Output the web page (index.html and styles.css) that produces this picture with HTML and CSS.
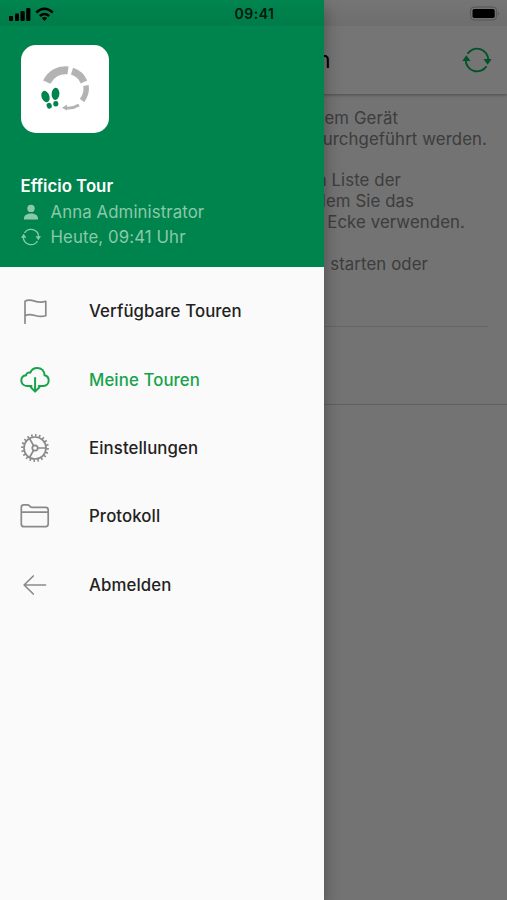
FILE: index.html
```html
<!DOCTYPE html>
<html lang="de">

<head>
    <meta charset="UTF-8">
    <meta name="viewport" content="width=device-width, initial-scale=1.0">
    <title>Efficio Tour</title>
    <link rel="stylesheet" href="styles.css">
</head>

<body>
    <div class="screen">
        <!-- Page behind the drawer -->
        <main class="page">
            <header class="page-header">
                <h1>n</h1>
                <svg class="sync" viewBox="0 0 30 28">
                    <path d="M5.500 7.800A11.300 11.300 0 0 1 26.300 14M24.500 20.200A11.300 11.300 0 0 1 3.700 14" fill="none" stroke="currentColor" stroke-width="1.9"/>
                    <path d="M21.500 13h8.200l-4.100 5.800zM.3 15h8.200L4.400 9.200z" fill="currentColor"/>
                </svg>
            </header>
            <section class="intro">
                <p class="end-gerat">dem Gerät</p>
                <p class="end-werden">durchgeführt werden.</p>
                <p class="end-liste gap">n Liste der</p>
                <p class="end-das">dem Sie das</p>
                <p class="end-verwenden">Ecke verwenden.</p>
                <p class="end-oder gap">starten oder</p>
            </section>
            <div class="row"></div>
        </main>
        <div class="scrim"></div>

        <!-- Drawer -->
        <aside class="drawer">
            <div class="drawer-header">
                <div class="logo">
                    <svg viewBox="0 0 88 88">
                        <g fill="none" stroke="#b3b3b3">
                            <path d="M25.800 37.200A20 20 0 0 1 47 25.400" stroke-width="8"/>
                            <path d="M51 26.200A19.500 19.500 0 0 1 63 37" stroke-width="7"/>
                            <path d="M65 40.500A20 20 0 0 1 61 55.500" stroke-width="5.500"/>
                            <path d="M58 60A21 21 0 0 1 44 62.800" stroke-width="2.800"/>
                        </g>
                        <path d="M41 62.700l5-3.200v6z" fill="#b3b3b3"/>
                        <g fill="#00844d">
                            <ellipse cx="24.500" cy="51.500" rx="3.900" ry="5.900" transform="rotate(-20 24.500 51.500)"/>
                            <rect x="25.700" y="57.800" width="5" height="5.800" rx="2.300" transform="rotate(-20 28.200 60.700)"/>
                            <ellipse cx="34.500" cy="48.900" rx="3.900" ry="6.100" transform="rotate(3 34.500 48.900)"/>
                            <rect x="32.300" y="55.900" width="5" height="5.600" rx="2.300"/>
                        </g>
                    </svg>
                </div>
                <h2>Efficio Tour</h2>
                <div class="info">
                    <svg viewBox="0 0 20 20">
                        <circle cx="10" cy="6.400" r="3.700" fill="currentColor"/>
                        <path d="M3 17.500v-1.200c0-3.100 3.600-4.700 7-4.700s7 1.600 7 4.700v1.200z" fill="currentColor"/>
                    </svg>
                    <span>Anna Administrator</span>
                </div>
                <div class="info">
                    <svg viewBox="0 0 20 20">
                        <path d="M3.500 6A7.700 7.700 0 0 1 17.700 10M16.500 14A7.700 7.700 0 0 1 2.300 10" fill="none" stroke="currentColor" stroke-width="1.300"/>
                        <path d="M14.600 9.300h5.400l-2.700 3.900zM0 10.700h5.400L2.700 6.800z" fill="currentColor"/>
                    </svg>
                    <span>Heute, 09:41 Uhr</span>
                </div>
            </div>
            <nav class="menu">
                <a class="item">
                    <svg viewBox="0 0 30 30">
                        <path d="M5 27.200V5.200c3-1.800 6-1.300 9.600-.1 4 1.300 7 1.400 11.200.3v14.300c-3.400 1.200-6.800 1-10.800-.2-4-1.100-7-1.200-10 .1"/>
                    </svg>
                    <span>Verfügbare Touren</span>
                </a>
                <a class="item active">
                    <svg viewBox="0 0 30 30">
                        <path d="M11.500 20.900H6.800C3.600 20.900 1.300 18.600 1.300 15.600c0-2.900 2-5 4.800-5.300.2-2 1.900-3.200 4.200-2.600C11.500 4.600 14 2.900 17.200 2.900c4.300 0 7.200 3.100 7.300 7.400 2.600.6 4.200 2.500 4.200 5.200 0 3.100-2.200 5.400-5.300 5.400h-4.600"/>
                        <path d="M15.100 13v13M10.800 22.300l4.300 4.300 4.300-4.300"/>
                    </svg>
                    <span>Meine Touren</span>
                </a>
                <a class="item">
                    <svg viewBox="0 0 30 30">
                        <circle cx="15" cy="15" r="11"/>
                        <circle class="teeth" cx="15" cy="15" r="12.700" pathLength="80"/>
                        <circle cx="15" cy="15" r="2.700"/>
                        <path d="M17.700 15H26M13.600 12.700L9.500 5.500M13.600 17.300L9.500 24.500"/>
                    </svg>
                    <span>Einstellungen</span>
                </a>
                <a class="item">
                    <svg viewBox="0 0 30 30">
                        <path d="M1.300 10.200V6.300c0-1.600.8-2.400 2.400-2.400h3.800c2.200 0 2.300 2.500 4.800 2.500h13.400c1.600 0 2.500.9 2.500 2.500v14.200c0 1.700-.9 2.600-2.500 2.600H3.900c-1.700 0-2.600-.9-2.600-2.600zM1.300 11.200h26.900"/>
                    </svg>
                    <span>Protokoll</span>
                </a>
                <a class="item">
                    <svg viewBox="0 0 30 30">
                        <path d="M25.500 15H4.400M13.300 6L4.100 15l9.200 9"/>
                    </svg>
                    <span>Abmelden</span>
                </a>
            </nav>
        </aside>

        <!-- Status bar -->
        <div class="status">
            <svg class="signal" viewBox="0 0 46 16">
                <rect x="0" y="10" width="4" height="5" rx="1"/>
                <rect x="6" y="7.500" width="4" height="7.500" rx="1"/>
                <rect x="11.500" y="5" width="4.200" height="10" rx="1"/>
                <rect x="17.200" y="2" width="4.200" height="13" rx="1"/>
                <g class="waves">
                    <path d="M27.300 6.500Q35.500-.8 43.700 6.500"/>
                    <path d="M30.800 10Q35.500 6 40.200 10"/>
                </g>
                <path d="M32.800 11.900q2.700-2 5.400 0l-2.700 3z"/>
            </svg>
            <time>09:41</time>
            <svg class="battery" viewBox="0 0 30 16">
                <rect class="frame" x=".6" y="1" width="26" height="13" rx="3.500"/>
                <rect x="2.500" y="3" width="22.200" height="9" rx="1.800"/>
                <path class="cap" d="M28 5.500q2 2 0 4z"/>
            </svg>
        </div>
    </div>
</body>

</html>
```
FILE: styles.css
```css
body {
    margin: 0;
    font-family: 'Inter', 'Liberation Sans', sans-serif;
    color: #222;
}

h1,
h2,
p {
    margin: 0;
}

.screen {
    position: relative;
    width: 507px;
    height: 900px;
    overflow: hidden;
}

/* Page behind the drawer */
.page {
    height: 900px;
    background-color: #fafafa;
}

.page-header {
    display: flex;
    align-items: center;
    justify-content: space-between;
    box-sizing: border-box;
    height: 94px;
    padding: 26px 15px 0 317px;
    background-color: #fff;
    box-shadow: 0 1px 3px rgba(0, 0, 0, 0.35);
}

.page-header h1 {
    font-size: 23px;
    font-weight: 400;
    color: #000;
}

.sync {
    width: 30px;
    height: 28px;
    color: #00b355;
}

.intro {
    box-sizing: border-box;
    height: 233px;
    margin-right: 19px;
    padding-top: 14px;
    border-bottom: 1px solid #dcdcdc;
    text-align: right;
    font-size: 16.8px;
    line-height: 20.8px;
    letter-spacing: 0.1px;
    color: #858585;
}

.intro .gap {
    margin-top: 20.8px;
}

.end-gerat {
    padding-right: 90px;
}

.end-werden {
    padding-right: 1px;
}

.end-liste {
    padding-right: 87px;
}

.end-das {
    padding-right: 74px;
}

.end-verwenden {
    padding-right: 23px;
}

.end-oder {
    padding-right: 60px;
}

.row {
    height: 77px;
    border-bottom: 1px solid #d2d2d2;
}

.scrim {
    position: absolute;
    inset: 0;
    background-color: rgba(0, 0, 0, 0.54);
}

/* Drawer */
.drawer {
    position: absolute;
    top: 0;
    left: 0;
    width: 323.5px;
    height: 900px;
    background-color: #fafafa;
    box-shadow: 0 8px 16px rgba(0, 0, 0, 0.35);
}

.drawer-header {
    box-sizing: border-box;
    height: 267px;
    padding: 45px 20.5px 0;
    background-color: #00844d;
}

.logo {
    width: 88px;
    height: 88px;
    border-radius: 15px;
    background-color: #fff;
}

.logo svg {
    display: block;
}

.drawer-header h2 {
    margin-top: 40px;
    font-size: 16.8px;
    line-height: 26px;
    font-weight: 600;
    color: #fff;
}

.info {
    display: flex;
    align-items: center;
    gap: 10px;
    height: 25.5px;
    font-size: 16.8px;
    letter-spacing: 0.1px;
    color: #8bc9aa;
}

.info svg {
    width: 20px;
    height: 20px;
}

.menu {
    padding-top: 10px;
}

.item {
    display: flex;
    align-items: center;
    gap: 39px;
    height: 68.4px;
    padding-left: 20px;
    font-size: 16.8px;
    font-weight: 500;
    letter-spacing: 0.1px;
}

.item svg {
    width: 30px;
    height: 30px;
    fill: none;
    stroke: #8a8a8a;
    stroke-width: 1.7;
    stroke-linecap: round;
    stroke-linejoin: round;
}

.item .teeth {
    stroke-width: 2.4;
    stroke-linecap: butt;
    stroke-dasharray: 1.6 2.4;
}

.item.active {
    color: #17a34b;
}

.item.active svg {
    stroke: #17a34b;
    stroke-width: 2;
}

/* Status bar */
.status {
    position: absolute;
    top: 0;
    left: 0;
    display: grid;
    grid-template-columns: 1fr auto 1fr;
    align-items: center;
    box-sizing: border-box;
    width: 507px;
    height: 26px;
    padding: 1px 7px 0 9px;
    background: linear-gradient(rgba(0, 0, 0, 0), rgba(0, 0, 0, 0.06));
}

.signal {
    width: 46px;
    height: 16px;
}

.waves {
    fill: none;
    stroke: #000;
    stroke-width: 2.4;
}

.status time {
    font-size: 14px;
    font-weight: 600;
    letter-spacing: 0.5px;
    color: #06170e;
}

.battery {
    justify-self: end;
    width: 30px;
    height: 16px;
}

.battery .frame {
    fill: none;
    stroke: #555;
}

.battery .cap {
    fill: #555;
}
```
